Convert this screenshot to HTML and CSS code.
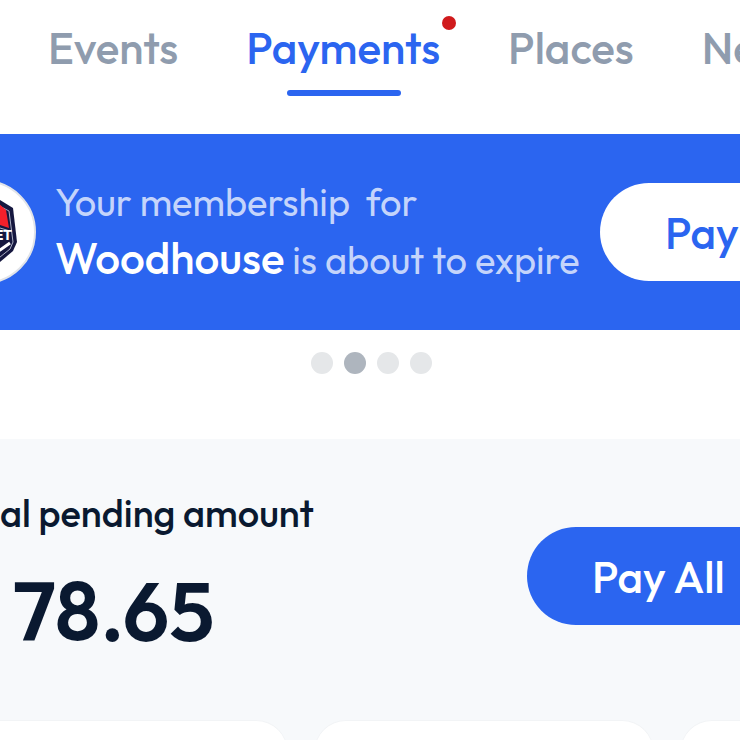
FILE: index.html
```
<!DOCTYPE html>
<html lang="en">
<head>
    <meta charset="UTF-8">
    <meta name="viewport" content="width=device-width, initial-scale=1.0">
    <title>Payments</title>
    <link rel="stylesheet" href="styles.css">
</head>
<body>
    <nav class="tabs">
        <a href="#">Events</a>
        <a href="#" class="active">Payments<span class="alert"></span></a>
        <a href="#">Places</a>
        <a href="#">Ne</a>
    </nav>

    <section class="banner">
        <div class="avatar">
            <svg viewBox="0 0 100 100" role="img" aria-label="Club logo">
                <path d="M50 10 L66 18 L79 26 L83 60 L79 69 L66 80 L50 93 L34 80 L21 69 L17 60 L21 26 L34 18 Z" fill="#15173f"/>
                <path d="M50 16 L75 29 L79 60 L76 67 L50 88 L24 67 L21 60 L25 29 Z" fill="none" stroke="#a9aec4" stroke-width="1"/>
                <path d="M50 17 L65 22 L72 28 L75 46 L66 43 L50 41 L34 43 L25 46 L28 28 L35 22 Z" fill="#f3202b"/>
                <path d="M25 49 L34 46 L50 44 L66 46 L76 49" fill="none" stroke="#a9aec4" stroke-width="1"/>
                <path d="M50 79 L66 68 L76 61 M24 61 L34 68 L50 79" fill="none" stroke="#fff" stroke-width="3"/>
                <text x="78" y="58" text-anchor="end">ET</text>
            </svg>
        </div>
        <p class="message">Your membership&nbsp; for<br><strong>Woodhouse</strong> is about to expire</p>
        <button class="btn btn-light">Pay</button>
    </section>

    <div class="dots">
        <span></span>
        <span class="current"></span>
        <span></span>
        <span></span>
    </div>

    <main class="summary">
        <div class="total">
            <div class="total-text">
                <h2>al pending amount</h2>
                <p class="amount">78.65</p>
            </div>
            <button class="btn btn-primary">Pay All</button>
        </div>
        <div class="cards">
            <div class="card"></div>
            <div class="card"></div>
            <div class="card"></div>
        </div>
    </main>
</body>
</html>
```
FILE: styles.css
```
* {
    margin: 0;
    padding: 0;
    box-sizing: border-box;
    font-family: Outfit, Lato, sans-serif;
}

body {
    min-height: 100vh;
    display: flex;
    flex-direction: column;
    background-color: #fff;
    color: #0a1930;
    overflow: hidden;
}

.tabs {
    display: flex;
    gap: 68px;
    height: 134px;
    padding: 20px 0 0 48px;
}

.tabs a {
    position: relative;
    height: 76px;
    color: #8f9cae;
    font-size: 44px;
    font-weight: 500;
    line-height: 56px;
    text-decoration: none;
}

.tabs .active {
    color: #2b65f0;
}

.tabs .active::after {
    content: "";
    position: absolute;
    bottom: 0;
    left: 21%;
    right: 20%;
    height: 6px;
    border-radius: 3px;
    background-color: #2b65f0;
}

.alert {
    position: absolute;
    top: -4px;
    right: -16px;
    width: 14px;
    height: 14px;
    border-radius: 50%;
    background-color: #d01a1c;
}

.banner {
    display: flex;
    align-items: center;
    height: 196px;
    background-color: #2b65f0;
}

.avatar {
    flex: none;
    width: 104px;
    height: 104px;
    margin-left: -68px;
    border: 2px solid #e2e4e8;
    border-radius: 50%;
    background-color: #fff;
}

.avatar svg {
    display: block;
}

.avatar text {
    fill: #fff;
    font-size: 14px;
    font-weight: bold;
}

.message {
    flex: 1;
    padding: 0 0 3px 19px;
    color: #c4d4fb;
    font-size: 38px;
    line-height: 56px;
    white-space: nowrap;
}

.message strong {
    color: #fff;
    font-size: 44px;
    font-weight: 500;
}

.btn {
    flex: none;
    height: 98px;
    border: none;
    border-radius: 49px;
    font-size: 44px;
    font-weight: 500;
    text-align: left;
    cursor: pointer;
}

.btn-light {
    width: 240px;
    margin-right: -100px;
    padding-left: 65px;
    background-color: #fff;
    color: #2b65f0;
}

.btn-primary {
    width: 260px;
    margin-right: -47px;
    padding-left: 65px;
    background-color: #2b65f0;
    color: #fff;
}

.dots {
    display: flex;
    justify-content: center;
    gap: 11px;
    height: 109px;
    padding: 22px 0 0 2px;
}

.dots span {
    width: 22px;
    height: 22px;
    border-radius: 50%;
    background-color: #e5e7e9;
}

.dots .current {
    background-color: #aeb5be;
}

.summary {
    flex: 1;
    padding-top: 47px;
    background-color: #f7f9fb;
}

.total {
    display: flex;
    justify-content: space-between;
    align-items: center;
    height: 180px;
}

.total-text {
    padding-top: 14px;
}

.total h2 {
    font-size: 38px;
    font-weight: 500;
    line-height: 56px;
}

.amount {
    padding-left: 13px;
    font-size: 82px;
    font-weight: 600;
    line-height: 140px;
}

.cards {
    display: grid;
    grid-template-columns: repeat(3, 340px);
    gap: 26px;
    height: 20px;
    margin: 54px 0 0 -52px;
    overflow: hidden;
}

.card {
    height: 200px;
    border: 1px solid #f2f4f6;
    border-radius: 32px;
    background-color: #fff;
}
```
